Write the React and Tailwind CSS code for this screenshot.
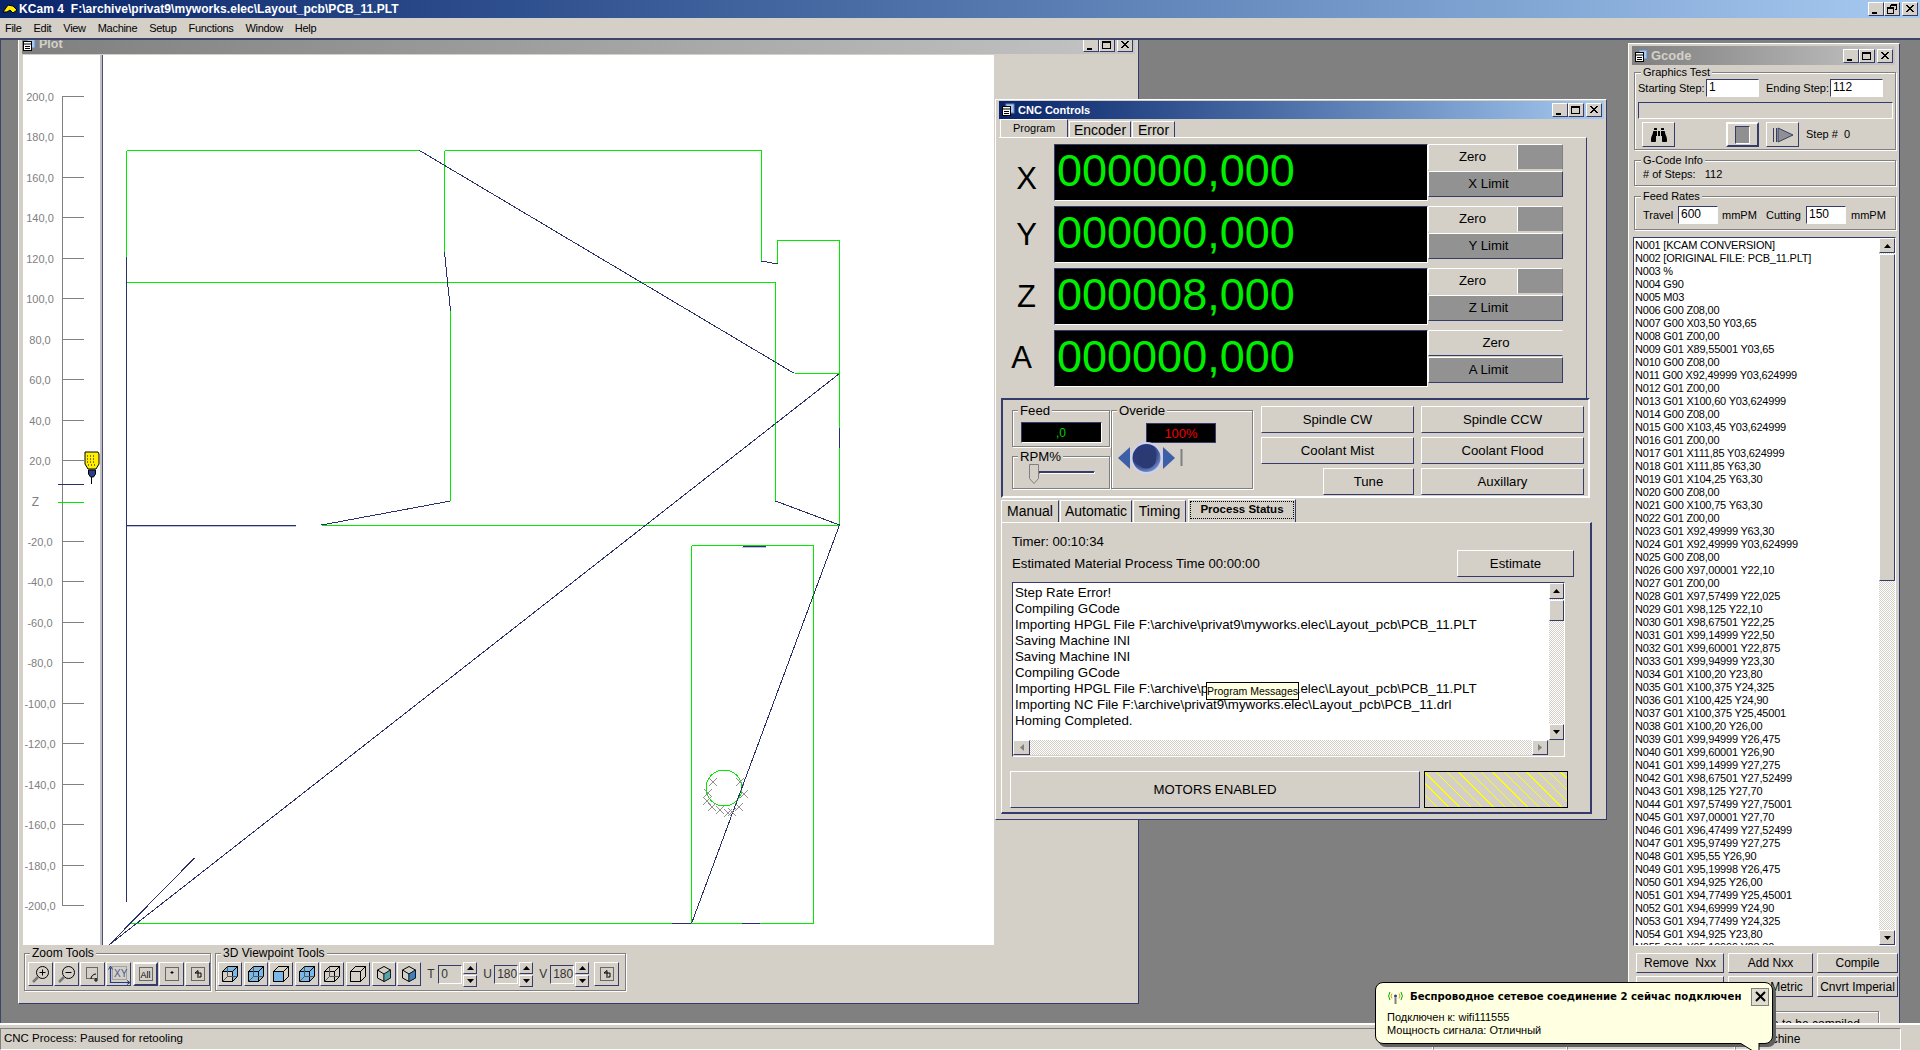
import React from "react";
import { FaBinoculars } from "react-icons/fa";

const R = "border border-t-white border-l-white border-r-[#353c6b] border-b-[#353c6b]";
const S = "border border-t-[#353c6b] border-l-[#353c6b] border-r-white border-b-white";
const CHECK = "bg-[repeating-conic-gradient(#d4d0c8_0_25%,#ffffff_0_50%)] bg-[length:2px_2px]";

const GCODE = `N001 [KCAM CONVERSION]
N002 [ORIGINAL FILE: PCB_11.PLT]
N003 %
N004 G90
N005 M03
N006 G00 Z08,00
N007 G00 X03,50 Y03,65
N008 G01 Z00,00
N009 G01 X89,55001 Y03,65
N010 G00 Z08,00
N011 G00 X92,49999 Y03,624999
N012 G01 Z00,00
N013 G01 X100,60 Y03,624999
N014 G00 Z08,00
N015 G00 X103,45 Y03,624999
N016 G01 Z00,00
N017 G01 X111,85 Y03,624999
N018 G01 X111,85 Y63,30
N019 G01 X104,25 Y63,30
N020 G00 Z08,00
N021 G00 X100,75 Y63,30
N022 G01 Z00,00
N023 G01 X92,49999 Y63,30
N024 G01 X92,49999 Y03,624999
N025 G00 Z08,00
N026 G00 X97,00001 Y22,10
N027 G01 Z00,00
N028 G01 X97,57499 Y22,025
N029 G01 X98,125 Y22,10
N030 G01 X98,67501 Y22,25
N031 G01 X99,14999 Y22,50
N032 G01 X99,60001 Y22,875
N033 G01 X99,94999 Y23,30
N034 G01 X100,20 Y23,80
N035 G01 X100,375 Y24,325
N036 G01 X100,425 Y24,90
N037 G01 X100,375 Y25,45001
N038 G01 X100,20 Y26,00
N039 G01 X99,94999 Y26,475
N040 G01 X99,60001 Y26,90
N041 G01 X99,14999 Y27,275
N042 G01 X98,67501 Y27,52499
N043 G01 X98,125 Y27,70
N044 G01 X97,57499 Y27,75001
N045 G01 X97,00001 Y27,70
N046 G01 X96,47499 Y27,52499
N047 G01 X95,97499 Y27,275
N048 G01 X95,55 Y26,90
N049 G01 X95,19998 Y26,475
N050 G01 X94,925 Y26,00
N051 G01 X94,77499 Y25,45001
N052 G01 X94,69999 Y24,90
N053 G01 X94,77499 Y24,325
N054 G01 X94,925 Y23,80
N055 G01 X95,19999 Y23,30`.split("\n");

const LOG = [
  "Step Rate Error!",
  "Compiling GCode",
  "Importing HPGL File F:\\archive\\privat9\\myworks.elec\\Layout_pcb\\PCB_11.PLT",
  "Saving Machine INI",
  "Saving Machine INI",
  "Compiling GCode",
  "Importing HPGL File F:\\archive\\privat9\\myworks.elec\\Layout_pcb\\PCB_11.PLT",
  "Importing NC File F:\\archive\\privat9\\myworks.elec\\Layout_pcb\\PCB_11.drl",
  "Homing Completed.",
];

function Ctl({ kind }) {
  return (
    <span className={`${R} w-[16px] h-[14px] bg-[#d4d0c8] flex items-center justify-center`}>
      <svg width="12" height="10" viewBox="0 0 12 10" fill="none" stroke="#000" strokeWidth="1" shapeRendering="crispEdges">
        {kind === "min" && <path d="M2 8.5h5" strokeWidth="2" />}
        {kind === "max" && <path d="M1.5 1.5h8v7h-8zM1.5 2.5h8" />}
        {kind === "restore" && <path d="M4.5 .5h6v5h-2M4.5 1.5h6M1.5 3.5h6v6h-6zM1.5 4.5h6M4.5 .5v3" />}
        {kind === "close" && <path d="M2 1l7 7M3 1l7 7M9 1L2 8M10 1L3 8" shapeRendering="auto" strokeWidth="1" />}
      </svg>
    </span>
  );
}

function DocIcon() {
  return (
    <svg width="14" height="14" viewBox="0 0 14 14" className="shrink-0">
      <rect x="5" y="1" width="8" height="9" fill="#a6caf0" stroke="#6a86b0" />
      <rect x="1.5" y="3.5" width="8" height="9" fill="#fff" stroke="#000" />
      <path d="M1.5 6h8M3 8.5h5M3 10.5h5" stroke="#000" />
    </svg>
  );
}

function Title({ text, active, className, textClass = "text-[11px]" }) {
  return (
    <div className={`flex items-center shrink-0 bg-linear-to-r ${active ? "from-[#0a246a] to-[#a6caf0] text-white" : "from-[#808080] to-[#c4c4c4] text-[#d4d0c8]"} ${className}`}>
      <DocIcon />
      <span className={`ml-[3px] font-bold flex-1 leading-none ${textClass}`}>{text}</span>
      <div className="flex items-center mr-[2px]">
        <Ctl kind="min" />
        <Ctl kind="max" />
        <span className="w-[2px]" />
        <Ctl kind="close" />
      </div>
    </div>
  );
}

function Btn({ className = "", children, bevel = R }) {
  return <div className={`${bevel} bg-[#d4d0c8] flex items-center justify-center shrink-0 ${className}`}>{children}</div>;
}

function Group({ label, className = "", labelPos = "left-[5px]", children }) {
  return (
    <div className={`relative border border-[#808080] shadow-[inset_1px_1px_0_#ffffff,1px_1px_0_#ffffff] shrink-0 ${className}`}>
      {label && <span className={`absolute top-[-7px] bg-[#d4d0c8] px-[2px] leading-[13px] whitespace-nowrap ${labelPos}`}>{label}</span>}
      {children}
    </div>
  );
}

function Tri({ dir }) {
  const pts = { up: "0,4 3.5,0 7,4", down: "0,0 7,0 3.5,4", left: "4,0 4,7 0,3.5", right: "0,0 0,7 4,3.5" }[dir];
  const v = dir === "up" || dir === "down";
  return (
    <svg width={v ? 7 : 4} height={v ? 4 : 7} viewBox={v ? "0 0 7 4" : "0 0 4 7"}>
      <polygon points={pts} fill={v ? "#000" : "#808080"} />
    </svg>
  );
}

function Spin({ value }) {
  return (
    <div className="flex items-center ml-[4px]">
      <div className={`${S} w-[24px] h-[19px] text-[12px] pl-[2px] leading-[17px]`}>{value}</div>
      <div className="flex flex-col gap-[1px] ml-[1px]">
        <Btn className="w-[14px] h-[12px]"><Tri dir="up" /></Btn>
        <Btn className="w-[14px] h-[12px]"><Tri dir="down" /></Btn>
      </div>
    </div>
  );
}

function Cube({ faces = [], inner }) {
  const fill = (n) => (faces.includes(n) ? "#7ab8e8" : "none");
  return (
    <svg width="18" height="18" viewBox="0 0 18 18" fill="none" stroke="#000" strokeWidth="1">
      <path d="M6.5 1.5h10v10l-5 5h-10v-10z" fill={fill("back")} />
      <path d="M1.5 6.5h10v10h-10z" fill={fill("front")} />
      <path d="M1.5 6.5l5-5h10l-5 5z" fill={fill("top")} />
      <path d="M11.5 6.5l5-5v10l-5 5z" fill={fill("side")} />
      {inner && <path d="M6.5 1.5v10h10M6.5 11.5l-5 5" stroke="#555" />}
    </svg>
  );
}

function Iso({ color }) {
  return (
    <svg width="18" height="18" viewBox="0 0 18 18" fill="none" stroke="#000">
      <path d="M9 1.5l6.5 3.5v8L9 16.5 2.5 13V5z" />
      <path d="M9 9l6.5-4M9 9L2.5 5M9 9v7.5" />
      <path d="M9 9l6.5-4v8L9 16.5z" fill={color} strokeWidth=".6" />
    </svg>
  );
}

function Dots({ children }) {
  return (
    <svg width="18" height="18" viewBox="0 0 18 18" fill="none" stroke="#000">
      <rect x="2.5" y="2.5" width="13" height="13" strokeDasharray="1 1" />
      {children}
    </svg>
  );
}

function Mag({ plus }) {
  return (
    <svg width="20" height="20" viewBox="0 0 20 20" fill="none" stroke="#000">
      <circle cx="11.5" cy="8.5" r="6" />
      <path d="M8.5 8.5h6" />
      {plus && <path d="M11.5 5.5v6" />}
      <path d="M7 13l-5 5" stroke="#777" strokeWidth="2.5" />
    </svg>
  );
}

const ZOOM_ICONS = [
  <Mag plus key="a" />,
  <Mag key="b" />,
  <svg key="c" width="18" height="18" viewBox="0 0 18 18" fill="none" stroke="#000"><rect x="2.5" y="2.5" width="11" height="11" strokeDasharray="1 1" /><path d="M7 14a5 5 0 0 1 5-5M12 13v4M10 15h4" /></svg>,
  <svg key="d" width="23" height="22" viewBox="0 0 23 22" fill="none"><path d="M3.5 4.500V19.500H22" stroke="#1f3a8a" strokeWidth="1.200" /><path d="M1.500 6.500L3.500 3l2 3.500M20 17.500l3 2-3 2" stroke="#1f3a8a" /><rect x="5.500" y="3.500" width="14" height="13" stroke="#777" strokeDasharray="1 1" /><text x="7" y="14" fontSize="10" fill="#4a5a90" stroke="none">XY</text></svg>,
  <Dots key="e"><text x="3.5" y="13" fontSize="9" fill="#000" stroke="none">All</text></Dots>,
  <Dots key="f"><path d="M9 6v3M7.5 7.5h3" /></Dots>,
  <Dots key="g"><path d="M6 8l3-2.5V11M6 8h6v4H8" /></Dots>,
];

function AxisRow({ axis, value, labelClass = "", single }) {
  return (
    <div className="flex h-[57px]">
      <div className={`w-[55px] flex items-center justify-center text-[31px] leading-none text-black ${labelClass}`}>{axis}</div>
      <div className={`${S} w-[374px] bg-black flex items-center pl-[2px] pb-[5px] text-[45px] leading-none text-[#00ef00]`}>{value}</div>
      <div className="w-[135px] flex flex-col gap-[1px]">
        <div className="flex h-[26px]">
          {single ? (
            <Btn className="flex-1 border-r-[#d4d0c8] pl-[1px]">Zero</Btn>
          ) : (
            <>
              <Btn className="w-[89px] border-r-[#d4d0c8] border-b-[#d4d0c8]">Zero</Btn>
              <div className="flex-1 bg-[#929292] border border-t-white border-l-white border-r-[#808080] border-b-[#d4d0c8]" />
            </>
          )}
        </div>
        <div className={`${R} h-[26px] bg-[#929292] flex items-center justify-center pr-[14px]`}>{axis} Limit</div>
      </div>
    </div>
  );
}

function Plot() {
  const green = [
    "M126.5 150.5H419.5",
    "M126.5 150.5V257",
    "M126.5 282.5H775.5V501",
    "M444.5 150.5H761.5V261",
    "M444.5 150.5V252",
    "M450.5 311V501",
    "M321.5 525.5H839.5V240.5H777.5V264",
    "M794.5 373.5H839.5",
    "M691.5 545.5H813.5V923.5H130",
    "M691.5 545.5V923",
  ];
  const navy = [
    "M126.5 257V902",
    "M775.5 501L839.5 525",
    "M444.5 252L450.5 311",
    "M450.5 501L321.5 525",
    "M761.5 261L777.5 264",
    "M419.5 150.5L794.5 373.5",
    "M839.5 373.5L109 945",
    "M839.5 525L691.5 923.5",
    "M194.5 858L109 945",
    "M672 923.5H691",
    "M742 923.5H760",
    "M126 525.5H295.5",
    "M743 546.5H766",
    "M839.5 428V448",
  ];
  const xs = [[713, 782], [740, 782], [744, 794], [708, 793], [712, 807], [707, 801], [720, 810], [728, 813], [739, 807], [732, 812]];
  return (
    <svg width="891" height="890" viewBox="103 55 891 890" className="block" shapeRendering="crispEdges">
      <path d="M127 525.500H295.500" transform="translate(0 1)" stroke="#bcc0e0" />
      <path d="M742 547.500H766" stroke="#bcc0e0" />
      {green.map((d) => <path key={d} d={d} fill="none" stroke="#00ea00" strokeWidth="1" />)}
      <ellipse cx="724" cy="788" rx="18" ry="18" fill="none" stroke="#00ea00" strokeWidth="1" />
      {navy.map((d) => <path key={d} d={d} fill="none" stroke="#2a3068" strokeWidth="1" />)}
      {xs.map(([x, y]) => (
        <path key={x + "-" + y} d={`M${x - 4} ${y - 4}L${x + 4} ${y + 4}M${x + 4} ${y - 4}L${x - 4} ${y + 4}`} stroke="#909090" strokeWidth="1" fill="none" />
      ))}
    </svg>
  );
}

function Ruler() {
  const rows = [];
  for (let i = 0; i <= 20; i++) rows.push(200 - i * 20);
  return (
    <svg width="77" height="890" viewBox="23 55 77 890" className="block">
      <path d="M62.5 96V905" stroke="#808080" />
      {rows.map((v, i) => {
        const y = Math.round(96 + i * 40.45) + 0.5;
        if (v === 0) {
          return (
            <g key={v}>
              <text x="35.5" y={y + 4.5} textAnchor="middle" fontSize="12" fill="#808080">Z</text>
              <path d={`M58 ${y + 1}H84`} stroke="#00e600" />
            </g>
          );
        }
        return (
          <g key={v}>
            <text x="40" y={y + 4} textAnchor="middle" fontSize="11" fill="#808080">{`${v},0`}</text>
            <path d={`M62 ${y}H84`} stroke="#808080" />
          </g>
        );
      })}
      <path d="M58 484.5H84" stroke="#2a3068" />
      <path d="M85 452h13l1 2v10l-3 5h-8l-3-5v-10z" fill="#ffee00" stroke="#000" />
      <path d="M87 456h9M87 459h9M87 462h9M88 465h7" stroke="#000" strokeDasharray="1 2" />
      <path d="M88.5 470h7v4l-2 3h-3l-2-3z" fill="#27408b" stroke="#000" />
      <path d="M91.5 477V484" stroke="#000" />
    </svg>
  );
}

function Knob() {
  return (
    <svg width="66" height="34" viewBox="0 0 66 34">
      <defs>
        <radialGradient id="knobg" cx=".4" cy=".35" r=".7">
          <stop offset="0" stopColor="#2a3a78" />
          <stop offset=".6" stopColor="#2b3b7a" />
          <stop offset="1" stopColor="#7b9ad6" />
        </radialGradient>
      </defs>
      <polygon points="0,17 12,6 12,28" fill="#3b5fa8" />
      <polygon points="57,17 45,6 45,28" fill="#3b5fa8" />
      <circle cx="28.5" cy="17" r="16" fill="#cfd2ee" />
      <circle cx="28.5" cy="17" r="14" fill="url(#knobg)" />
      <circle cx="28.5" cy="18" r="9.5" fill="#2c3a74" />
      <path d="M63.5 8V25" stroke="#808080" strokeWidth="2" />
    </svg>
  );
}

function Cnc() {
  return (
    <div className="absolute left-[994px] top-[59px] w-[612px] h-[721px] bg-[#d4d0c8] border border-t-white border-l-white border-r-[#353c6b] border-b-[#353c6b] pl-[3px] pt-[1px] pr-[2px] flex flex-col text-[13.200px] text-black z-10">
      <Title text="CNC Controls" active className="h-[18px] pl-[2px] w-[605px]" />
      <div className="flex h-[18px] pl-[1px] items-end gap-[1px] text-[14px]">
        <div className="w-[68px] h-[18px] flex items-center justify-center text-[11px] border-t border-l border-t-white border-l-white border-r border-r-[#353c6b]">Program</div>
        <div className="w-[62px] h-[16px] flex items-center justify-center border-l border-t border-white border-r border-r-[#353c6b] leading-none">Encoder</div>
        <div className="w-[43px] h-[16px] flex items-center justify-center border-l border-t border-white border-r border-r-[#353c6b] leading-none">Error</div>
      </div>
      <div className="w-[588px] h-[261px] border-t border-t-white border-r border-r-[#353c6b] pt-[6px] flex flex-col gap-[5px] shrink-0">
        <AxisRow axis="X" value="000000,000" labelClass="pt-[12px]" />
        <AxisRow axis="Y" value="000000,000" />
        <AxisRow axis="Z" value="000008,000" />
        <AxisRow axis="A" value="000000,000" labelClass="pr-[10px] pb-[2px]" single />
      </div>
      <div className="ml-[2px] w-[589px] h-[100px] border-2 border-[#353c6b] border-r-white border-b-white shrink-0 flex pl-[9px] pt-[10px]">
        <div className="w-[98px] flex flex-col gap-[9px] shrink-0">
          <Group label="Feed" className="h-[37px] w-[98px] flex justify-center pt-[11px]">
            <div className={`${S} w-[81px] h-[21px] bg-black text-[#00d000] text-[12px] flex items-center justify-center leading-none`}>,0</div>
          </Group>
          <Group label="RPM%" className="h-[33px] w-[98px] flex items-center">
            <div className="relative w-full h-full">
              <div className={`absolute left-[26px] top-[14px] w-[56px] h-[3px] ${S} bg-[#353c6b]`} />
              <svg width="10" height="20" viewBox="0 0 10 20" className="absolute left-[16px] top-[7px]">
                <path d="M.5.5h9v14l-4.500 5-4.500-5z" fill="#d4d0c8" stroke="#808080" />
              </svg>
            </div>
          </Group>
        </div>
        <Group label="Overide" className="w-[142px] h-[79px] ml-[1px] flex flex-col">
          <div className="ml-[34px] mt-[12px] w-[70px] h-[20px] bg-black border border-[#353c6b] text-[#f00000] text-[13px] flex items-center justify-center leading-none">100%</div>
          <div className="ml-[6px] mt-[-2px]"><Knob /></div>
        </Group>
        <div className="ml-[8px] -mt-[4px] grid grid-cols-[153px_163px] gap-x-[7px] gap-y-[4px] grid-rows-[27px_27px_27px]">
          <Btn>Spindle CW</Btn>
          <Btn>Spindle CCW</Btn>
          <Btn>Coolant Mist</Btn>
          <Btn>Coolant Flood</Btn>
          <Btn className="ml-[62px]">Tune</Btn>
          <Btn>Auxillary</Btn>
        </div>
      </div>
      <div className="flex items-end h-[23px] mt-[1px] ml-[2px] gap-[1px] text-[14px] shrink-0">
        <div className="w-[58px] h-[22px] flex items-center justify-center border-l border-t border-white border-r border-r-[#353c6b]">Manual</div>
        <div className="w-[72px] h-[22px] flex items-center justify-center border-l border-t border-white border-r border-r-[#353c6b]">Automatic</div>
        <div className="w-[53px] h-[22px] flex items-center justify-center border-l border-t border-white border-r border-r-[#353c6b]">Timing</div>
        <div className="w-[108px] h-[23px] ml-[1px] border-l border-t border-white border-r border-r-[#353c6b] p-[1px] pb-[3px]">
          <div className="h-full border border-dotted border-black flex items-center justify-center font-bold text-[11.500px] leading-none">Process Status</div>
        </div>
      </div>
      <div className="ml-[2px] w-[591px] h-[292px] border-t border-l border-white border-r-2 border-b-2 border-r-[#353c6b] border-b-[#353c6b] shrink-0 pl-[10px] pr-[16px] pt-[11px] flex flex-col">
        <div className="h-[16px] leading-[16px]">Timer: 00:10:34</div>
        <div className="h-[27px] flex items-center justify-between">
          <span>Estimated Material Process Time 00:00:00</span>
          <Btn className="w-[117px] h-[27px]">Estimate</Btn>
        </div>
        <div className="relative mt-[5px] w-[553px] h-[175px] border border-t-[#353c6b] border-l-[#353c6b] border-r-white border-b-white flex flex-col bg-[#d4d0c8] shrink-0">
          <div className="flex h-[157px]">
            <div className="flex-1 bg-white pt-[2px] pl-[2px] text-[13.300px] leading-[16px] whitespace-pre overflow-hidden">
              {LOG.map((l, i) => <div key={i}>{l}</div>)}
            </div>
            <div className={`w-[15px] flex flex-col ${CHECK}`}>
              <Btn className="h-[16px]"><Tri dir="up" /></Btn>
              <Btn className="h-[21px] mt-[1px]"></Btn>
              <div className="flex-1" />
              <Btn className="h-[16px]"><Tri dir="down" /></Btn>
            </div>
          </div>
          <div className="flex h-[15px]">
            <div className={`flex w-[535px] ${CHECK} justify-between`}>
              <Btn className="w-[17px]"><Tri dir="left" /></Btn>
              <Btn className="w-[16px]"><Tri dir="right" /></Btn>
            </div>
          </div>
          <div className="absolute left-[193px] top-[99px] w-[93px] h-[18px] bg-[#ffffe1] border border-black text-[10.500px] flex items-center justify-center whitespace-nowrap leading-none">Program Messages</div>
        </div>
        <div className="mt-[14px] -ml-[2px] flex gap-[4px] h-[37px] shrink-0">
          <Btn className="w-[410px]">MOTORS ENABLED</Btn>
          <div className="w-[144px] border border-black bg-[repeating-linear-gradient(45deg,#ffff00_0,#ffff00_1px,#d4d0c8_1px,#d4d0c8_8px)]" />
        </div>
      </div>
    </div>
  );
}

function Gcode() {
  return (
    <div className="absolute left-[1627px] top-[3px] w-[272px] h-[1000px] bg-[#d4d0c8] border border-t-white border-l-white border-r-[#353c6b] pl-[3px] pt-[2px] flex flex-col text-[11px] text-black">
      <Title text="Gcode" textClass="text-[13px]" className="h-[19px] w-[263px] pl-[2px]" />
      <Group label="Graphics Test" labelPos="left-[6px]" className="mt-[7px] ml-[2px] w-[262px] h-[78px] px-[3px] pt-[6px]">
        <div className="flex items-center h-[18px]">
          <span className="w-[68px] whitespace-nowrap">Starting Step:</span>
          <div className={`${S} bg-white w-[53px] h-[18px] pl-[2px] leading-[15px] text-[12px]`}>1</div>
          <span className="w-[64px] ml-[7px] whitespace-nowrap">Ending Step:</span>
          <div className={`${S} bg-white w-[53px] h-[18px] pl-[2px] leading-[15px] text-[12px]`}>112</div>
        </div>
        <div className={`${S} mt-[5px] h-[17px] w-[255px]`} />
        <div className="flex items-center mt-[3px] h-[25px] pl-[4px]">
          <Btn className="w-[33px] h-[25px]"><FaBinoculars className="text-[16px] text-black" /></Btn>
          <Btn className="w-[33px] h-[25px] ml-[51px] border-2 border-black">
            <span className="w-[15px] h-[18px] bg-[#909090] border border-t-[#353c6b] border-l-[#353c6b] border-r-white border-b-white" />
          </Btn>
          <Btn className="w-[33px] h-[25px] ml-[7px]">
            <svg width="22" height="16" viewBox="0 0 22 16" fill="#909090" stroke="#353c6b"><path d="M1.500 1v14M4.500 1v14" /><path d="M6 1l15 7-15 7z" /></svg>
          </Btn>
          <span className="ml-[7px] whitespace-pre">{"Step #  0"}</span>
        </div>
      </Group>
      <Group label="G-Code Info" labelPos="left-[6px]" className="mt-[10px] ml-[2px] w-[262px] h-[26px] pl-[8px] pt-[6px] leading-[14px]">
        <span className="whitespace-pre">{"# of Steps:   112"}</span>
      </Group>
      <Group label="Feed Rates" labelPos="left-[6px]" className="mt-[10px] ml-[2px] w-[262px] h-[34px] pl-[8px] pt-[9px]">
        <div className="flex items-center h-[18px]">
          <span className="w-[35px]">Travel</span>
          <div className={`${S} bg-white w-[40px] h-[18px] pl-[2px] leading-[15px] text-[12px]`}>600</div>
          <span className="ml-[4px] w-[44px]">mmPM</span>
          <span className="w-[40px]">Cutting</span>
          <div className={`${S} bg-white w-[40px] h-[18px] pl-[2px] leading-[15px] text-[12px]`}>150</div>
          <span className="ml-[5px]">mmPM</span>
        </div>
      </Group>
      <div className={`${S} mt-[7px] ml-[1px] w-[263px] h-[709px] flex shrink-0`}>
        <div className="flex-1 bg-white pl-[1px] overflow-hidden whitespace-pre text-[11px] tracking-[-0.2px] leading-[13px] pt-[1px]">
          {GCODE.map((l) => <div key={l}>{l}</div>)}
        </div>
        <div className={`w-[16px] flex flex-col ${CHECK}`}>
          <Btn className="h-[15px]"><Tri dir="up" /></Btn>
          <Btn className="h-[327px] mt-[1px]"></Btn>
          <div className="flex-1" />
          <Btn className="h-[15px]"><Tri dir="down" /></Btn>
        </div>
      </div>
      <div className="mt-[7px] ml-[4px] grid grid-cols-[88px_85px_81px] grid-rows-[20px_21px] gap-x-[4px] gap-y-[3px] text-[12px]">
        <Btn className="whitespace-pre">{"Remove  Nxx"}</Btn>
        <Btn>Add Nxx</Btn>
        <Btn>Compile</Btn>
        <Btn></Btn>
        <Btn>Cnvrt Metric</Btn>
        <Btn>Cnvrt Imperial</Btn>
      </div>
      <Group className="mt-[14px] ml-[4px] w-[243px] h-[40px] flex justify-end pr-[18px] pt-[3px] text-[12px]">
        <span>Gcode to be compiled</span>
      </Group>
    </div>
  );
}

function PlotWin() {
  return (
    <div className="absolute left-[17px] top-[-1px] w-[1121px] h-[965px] bg-[#d4d0c8] border-l border-b border-r border-l-white border-b-[#353c6b] border-r-[#353c6b] pl-[3px] pt-[1px] flex flex-col text-[11px]">
      <Title text="Plot" textClass="text-[12.500px]" className="h-[14px] w-[1113px] pb-[5px] overflow-visible" />
      <div className="flex mt-[1px] h-[890px] shrink-0 w-[972px]">
        <div className="bg-white w-[77px] h-[890px] ml-[1px]"><Ruler /></div>
        <div className="w-[3px] bg-[#c0c0c0] border-r border-[#4a4f73]" />
        <div className="bg-white w-[891px] h-[890px]"><Plot /></div>
      </div>
      <div className="flex gap-[4px] ml-[2px] mt-[8px] text-[12px]">
        <Group label="Zoom Tools" className="w-[187px] h-[38px] flex gap-[1px] pl-[3px] pt-[8px]">
          {ZOOM_ICONS.map((ic, i) => (
            <Btn key={i} className={`w-[25px] h-[24px] ${i === 4 ? "border-2 border-black ml-[1px]" : ""}`}>{ic}</Btn>
          ))}
        </Group>
        <Group label="3D Viewpoint Tools" className="w-[411px] h-[38px] flex items-start pl-[2px] pt-[8px]">
          <div className="flex gap-[1.600px]">
            <Btn className="w-[24px] h-[24px]"><Cube faces={["side", "top"]} inner /></Btn>
            <Btn className="w-[24px] h-[24px]"><Cube faces={["back"]} inner /></Btn>
            <Btn className="w-[24px] h-[24px]"><Cube faces={["front"]} /></Btn>
            <Btn className="w-[24px] h-[24px]"><Cube faces={["back"]} inner /></Btn>
            <Btn className="w-[24px] h-[24px]"><Cube inner /></Btn>
            <Btn className="w-[24px] h-[24px]"><Cube /></Btn>
            <Btn className="w-[24px] h-[24px]"><Iso color="#5aa0a8" /></Btn>
            <Btn className="w-[24px] h-[24px]"><Iso color="#3f7fc0" /></Btn>
          </div>
          <div className="flex items-center h-[24px] text-[12px] text-[#333] ml-[6px]">
            <span className="w-[7px]">T</span>
            <Spin value="0" />
            <span className="w-[7px] ml-[6px]">U</span>
            <Spin value="180" />
            <span className="w-[7px] ml-[6px]">V</span>
            <Spin value="180" />
            <Btn className="w-[25px] h-[24px] ml-[5px]"><Dots><path d="M6 8l3-2.500V11M6 8h6v4H8" /></Dots></Btn>
          </div>
        </Group>
      </div>
    </div>
  );
}

function Popup() {
  return (
    <div className="absolute left-[1375px] top-[982px] w-[398px] h-[62px] bg-[#ffffe1] border border-black rounded-[8px] shadow-[3px_3px_0_#606060] text-black text-[11px] z-20">
      <div className="flex items-center h-[27px] pl-[11px]">
        <svg width="17" height="14" viewBox="0 0 17 14" fill="none" strokeWidth="1">
          <path d="M3 2a7 7 0 0 0 0 8M14 2a7 7 0 0 1 0 8" stroke="#00b000" />
          <path d="M5 3.500a4 4 0 0 0 0 5M12 3.500a4 4 0 0 1 0 5" stroke="#e0a000" />
          <circle cx="8.500" cy="6" r="1.500" fill="#2040a0" />
          <path d="M8.500 7.500V14" stroke="#808080" strokeWidth="2" />
        </svg>
        <span className="ml-[6px] font-bold text-[10.150px] font-['DejaVu_Sans',sans-serif] whitespace-nowrap flex-1">Беспроводное сетевое соединение 2 сейчас подключен</span>
        <span className="w-[18px] h-[18px] mr-[3px] border border-[#808080] bg-[#e0ddd0] flex items-center justify-center shrink-0">
          <svg width="11" height="11" viewBox="0 0 11 11" stroke="#000" strokeWidth="2"><path d="M1 1l9 9M10 1l-9 9" /></svg>
        </span>
      </div>
      <div className="pl-[11px] mt-[1px] leading-[13px]">Подключен к: wifi111555</div>
      <div className="pl-[11px] leading-[13px]">Мощность сигнала: Отличный</div>
      <svg width="20" height="8" viewBox="0 0 20 8" className="absolute left-[364px] top-[60px]">
        <path d="M0 0L13 8H19V0z" fill="#ffffe1" />
        <path d="M0 0L13 8M19 0V8" stroke="#000" />
      </svg>
    </div>
  );
}

export default function App() {
  const P = "border-t border-l border-t-[#808080] border-l-[#808080] border-r border-b border-r-white border-b-white h-[22px] flex items-center whitespace-nowrap overflow-hidden";
  return (
    <div className="relative w-[1920px] h-[1050px] overflow-hidden flex flex-col font-['Liberation_Sans',sans-serif] bg-[#d4d0c8] text-black">
      <div className="h-[18px] shrink-0 bg-linear-to-r from-[#0a246a] to-[#a6caf0] flex items-center pl-[2px] text-white">
        <svg width="16" height="12" viewBox="0 0 16 12" className="shrink-0">
          <path d="M1 9l5-7 5 1 4 4-4 3-3-3-3 2z" fill="#ffee00" stroke="#000" />
        </svg>
        <span className="ml-[1px] font-bold text-[12px] tracking-[0.05px] whitespace-pre flex-1 leading-none">{"KCam 4  F:\\archive\\privat9\\myworks.elec\\Layout_pcb\\PCB_11.PLT"}</span>
        <div className="flex items-center mr-[2px]">
          <Ctl kind="min" />
          <Ctl kind="restore" />
          <span className="w-[2px]" />
          <Ctl kind="close" />
        </div>
      </div>
      <div className="h-[20px] shrink-0 flex items-center gap-[12px] pl-[5px] text-[11px] tracking-[-0.3px]">
        <span>File</span><span>Edit</span><span>View</span><span>Machine</span><span>Setup</span><span>Functions</span><span>Window</span><span>Help</span>
      </div>
      <div className="relative flex-1 bg-[#808080] border-t-2 border-l border-t-[#3c4468] border-l-[#3c4468] overflow-hidden">
        <PlotWin />
        <Cnc />
        <Gcode />
      </div>
      <div className="h-[27px] shrink-0 border-t-2 border-white flex items-start pt-[3px] text-[11.500px]">
        <div className={`${P} w-[1433px] pl-[3px]`}>CNC Process: Paused for retooling</div>
        <div className={`${P} w-[134px]`} />
        <div className={`${P} w-[168px]`} />
        <div className={`${P} w-[166px] pl-[19px] text-[12px]`}>Machine</div>
      </div>
      <Popup />
    </div>
  );
}
